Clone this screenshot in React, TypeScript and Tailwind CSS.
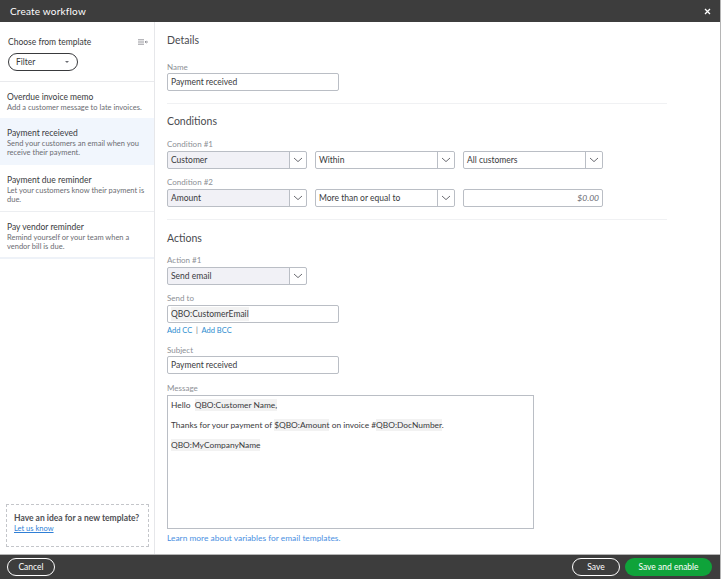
const Chevron = () => (
  <svg width="10" height="6" viewBox="0 0 10 6" fill="none" stroke="#6b6c72" strokeWidth="1">
    <path d="M1 1l4 3.6L9 1" />
  </svg>
)

function SelectBox({ value, grey, width = "w-[140px]" }: { value: string; grey?: boolean; width?: string }) {
  return (
    <div className={`flex h-[18px] ${width} items-stretch rounded-[2px] border border-[#babec5] ${grey ? "bg-[#f1f1f6] border-[#b4b6bc]" : "bg-white"}`}>
      <div className="flex-1 pl-[3px] text-[8.5px] leading-[16px] text-[#393a3d]">{value}</div>
      <div className="flex w-[17px] items-center justify-center border-l border-[#babec5] bg-white rounded-r-[2px]">
        <Chevron />
      </div>
    </div>
  )
}

function TextBox({ children, className = "" }: { children: React.ReactNode; className?: string }) {
  return (
    <div className={`flex h-[18px] w-[172px] items-center rounded-[2px] border border-[#babec5] pl-[3px] text-[8.5px] text-[#393a3d] ${className}`}>
      {children}
    </div>
  )
}

const Label = ({ children, className = "" }: { children: React.ReactNode; className?: string }) => (
  <div className={`text-[8px] leading-[10px] text-[#8d9096] ${className}`}>{children}</div>
)

const Token = ({ children }: { children: React.ReactNode }) => (
  <span className="bg-[#f2f2f2] py-[1px]">{children}</span>
)

const templates = [
  { title: "Overdue invoice memo", desc: "Add a customer message to late invoices.", h: "h-[36px] pt-[10px]" },
  { title: "Payment receieved", desc: "Send your customers an email when you receive their payment.", h: "h-[47px] pt-[10px] bg-[#f1f6fd]" },
  { title: "Payment due reminder", desc: "Let your customers know their payment is due.", h: "h-[47px] pt-[10px] border-b border-[#eceef1]" },
  { title: "Pay vendor reminder", desc: "Remind yourself or your team when a vendor bill is due.", h: "h-[47px] pt-[10px] border-b-2 border-[#eef2f8]" },
]

export default function App() {
  return (
    <div className="flex h-[579px] w-[721px] flex-col overflow-hidden border-r border-[#b5b5b5] bg-white font-['Lato',sans-serif] text-[#393a3d]">
      {/* Header */}
      <div className="flex h-[22px] shrink-0 items-center justify-between bg-[#3d3d3d] pl-[10px] pr-[9px] text-[10px] tracking-[0.2px] text-white">
        <span>Create workflow</span>
        <svg width="7" height="7" viewBox="0 0 7 7" stroke="white" strokeWidth="1.3"><path d="M1 1l5 5M6 1L1 6" /></svg>
      </div>

      <div className="flex min-h-0 flex-1">
        {/* Sidebar */}
        <div className="flex w-[155px] shrink-0 flex-col border-r border-[#e6e7ea]">
          <div className="h-[60px] shrink-0 border-b border-[#e9eaed] px-[8px] pt-[14px]">
            <div className="flex items-center justify-between text-[8.5px] leading-[12px]">
              <span>Choose from template</span>
              <svg className="mr-[-2px]" width="10" height="6" viewBox="0 0 10 6" stroke="#6b6c72" strokeWidth="0.7" fill="none"><path d="M0 .8h6M0 3h6M0 5.2h6M7 3h3M8.4 1.8L7.2 3l1.2 1.2" /></svg>
            </div>
            <div className="mt-[5px] flex h-[18px] w-[70px] items-center justify-between rounded-full border border-[#393a3d] pl-[7px] pr-[8px] text-[8.5px]">
              <span>Filter</span>
              <span className="h-0 w-0 border-x-[2.5px] border-t-[2.5px] border-x-transparent border-t-[#6b6c72]" />
            </div>
          </div>
          {templates.map((t) => (
            <div key={t.title} className={`shrink-0 pl-[7px] pr-[8px] ${t.h}`}>
              <div className="text-[8.5px] leading-[11px] text-[#393a3d]">{t.title}</div>
              <div className="mt-[-0.5px] text-[7.5px] leading-[9.5px] text-[#6b6c72]">{t.desc}</div>
            </div>
          ))}
          <div className="mb-[7px] ml-[6px] mr-[5px] mt-auto h-[43px] border border-dashed border-[#c4c6ca] pl-[7px] pt-[8px]">
            <div className="text-[8.5px] font-bold leading-[11px] text-[#4f5054]">Have an idea for a new template?</div>
            <a className="block text-[7.5px] leading-[10px] text-[#2f7fd6] underline">Let us know</a>
          </div>
        </div>

        {/* Form */}
        <div className="min-w-0 flex-1 pl-[12px] pr-[53px]">
          <div className="pt-[12px] text-[10.5px] leading-[13px] text-[#4a4b4f]">Details</div>
          <Label className="mt-[15px]">Name</Label>
          <TextBox className="mt-[1px]">Payment received</TextBox>
          <div className="mt-[12px] border-t border-[#f0f1f3]" />

          <div className="mt-[11px] text-[10.5px] leading-[13px] text-[#4a4b4f]">Conditions</div>
          <Label className="mt-[11px]">Condition #1</Label>
          <div className="mt-[2px] flex gap-[8px]">
            <SelectBox value="Customer" grey />
            <SelectBox value="Within" />
            <SelectBox value="All customers" />
          </div>
          <Label className="mt-[8px]">Condition #2</Label>
          <div className="mt-[2px] flex gap-[8px]">
            <SelectBox value="Amount" grey />
            <SelectBox value="More than or equal to" />
            <div className="h-[18px] w-[140px] rounded-[2px] border border-[#babec5] pr-[3px] text-right text-[8.5px] italic leading-[16px] text-[#6b6c72]">$0.00</div>
          </div>
          <div className="mt-[12px] border-t border-[#f0f1f3]" />

          <div className="mt-[12px] text-[10.5px] leading-[13px] text-[#4a4b4f]">Actions</div>
          <Label className="mt-[10px]">Action #1</Label>
          <div className="mt-[2px]"><SelectBox value="Send email" grey /></div>
          <Label className="mt-[8px]">Send to</Label>
          <TextBox className="mt-[2px]"><Token>QBO:CustomerEmail</Token></TextBox>
          <div className="mt-[3px] text-[7.5px] leading-[10px] text-[#2b8ccf]">
            Add CC <span className="text-[#6b6c72]">&nbsp;|&nbsp;</span> Add BCC
          </div>
          <Label className="mt-[9px]">Subject</Label>
          <TextBox className="mt-[1px]">Payment received</TextBox>
          <Label className="mt-[9px]">Message</Label>
          <div className="mt-[2px] h-[134px] w-[367px] border border-[#babec5] pl-[3px] pt-[4px] text-[8.4px] text-[#393a3d]">
            <div className="leading-[10px]">Hello &nbsp;<Token>QBO:Customer Name,</Token></div>
            <div className="mt-[10px] leading-[10px]">Thanks for your payment of <Token>$QBO:Amount</Token> on invoice #<Token>QBO:DocNumber</Token>.</div>
            <div className="mt-[10px] leading-[10px]"><Token>QBO:MyCompanyName</Token></div>
          </div>
          <div className="mt-[4px] text-[8.4px] leading-[10px] text-[#4a90e2]">Learn more about variables for email templates.</div>
        </div>
      </div>

      {/* Footer */}
      <div className="flex h-[25px] shrink-0 items-center justify-between border-t border-[#b5b5b5] bg-[#3d3d3d] pl-[7px] pr-[8px]">
        <div className="flex h-[18px] w-[48px] items-center justify-center rounded-full border border-white text-[8.5px] text-white">Cancel</div>
        <div className="flex items-center gap-[5px]">
          <div className="flex h-[18px] w-[48px] items-center justify-center rounded-full border border-white text-[8.5px] text-white">Save</div>
          <div className="flex h-[18px] w-[87px] items-center justify-center rounded-full bg-[#0fa33a] text-[8.5px] text-white">Save and enable</div>
        </div>
      </div>
    </div>
  )
}
